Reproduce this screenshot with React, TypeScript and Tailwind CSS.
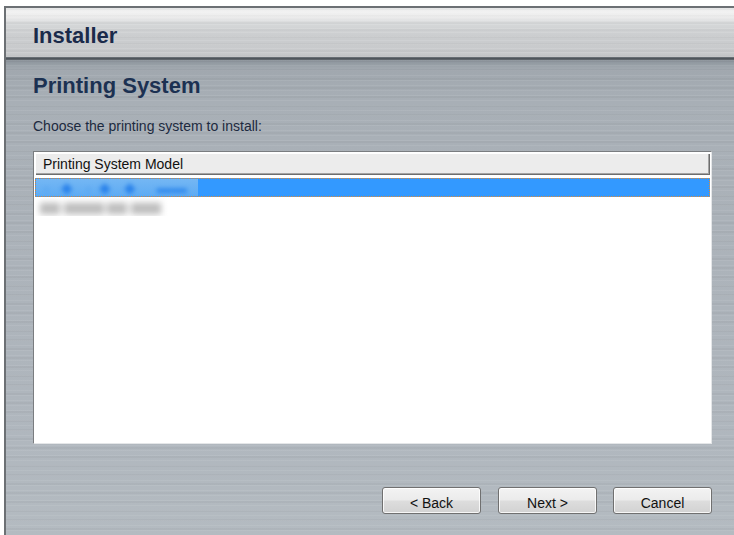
import React from "react";

function WizardButton({ label }: { label: string }) {
  return (
    <button
      type="button"
      className="box-border h-[27px] w-[99px] rounded-[3px] border border-[#707070] bg-[image:linear-gradient(180deg,#f3f3f3_0%,#ebebeb_48%,#dddddd_52%,#d2d2d2_100%)] pt-[5px] text-center text-[14px] leading-[16px] text-[#111] shadow-[inset_0_0_0_1px_rgba(255,255,255,0.8)]"
    >
      {label}
    </button>
  );
}

export default function App() {
  return (
    <div className="h-[535px] w-[734px] overflow-hidden bg-white pl-[4px] pt-[6px] font-['Liberation_Sans',Arial,sans-serif]">
      <div className="flex h-[529px] flex-col border-l-2 border-t-2 border-[#6c7074]">
        {/* title band */}
        <div className="h-[49px] shrink-0 bg-[image:repeating-linear-gradient(180deg,rgba(255,255,255,0.10)_0px,rgba(255,255,255,0.10)_1px,transparent_1px,transparent_4px),repeating-linear-gradient(180deg,rgba(0,0,0,0.025)_0px,rgba(0,0,0,0.025)_2px,transparent_2px,transparent_7px),linear-gradient(180deg,#e6e7e8_0px,#f1f1f1_3px,#ededed_9px,#d6d8d9_15px,#cbcdcf_28px,#c7c9cb_46px,#bdbfc1_49px)] pl-[27px] pt-[15px]">
          <h1 className="text-[22px] font-bold leading-[26px] text-[#1a2a4a]">Installer</h1>
        </div>
        <div className="h-[3px] shrink-0 bg-[image:linear-gradient(180deg,#737a80,#4f555b_50%,#646b71)]" />

        {/* page body */}
        <div className="flex flex-1 flex-col bg-[image:repeating-linear-gradient(180deg,rgba(255,255,255,0.07)_0px,rgba(255,255,255,0.07)_1px,transparent_1px,transparent_5px),repeating-linear-gradient(180deg,rgba(0,0,0,0.03)_0px,rgba(0,0,0,0.03)_2px,transparent_2px,transparent_9px),linear-gradient(180deg,#8b939b_0px,#a0a7ae_8px,#a8afb6_40px,#acb3ba_200px,#b0b7be_380px,#b4bbc1_475px)] pl-[27px] pr-[22px] pt-[13px]">
          <h2 className="text-[22px] font-bold leading-[26px] text-[#1c3152]">Printing System</h2>
          <p className="mt-[19px] text-[14px] leading-[16px] text-[#1d2a40]">
            Choose the printing system to install:
          </p>

          {/* model list */}
          <div className="mt-[17px] box-border h-[293px] border border-b-[#e4e6e8] border-l-[#7a7d80] border-r-[#e4e6e8] border-t-[#7a7d80] bg-white p-px">
            <div className="box-border h-[22px] bg-[#ececec] pl-[8px] pt-[3px] text-[14px] leading-[16px] text-[#111] shadow-[inset_1px_1px_0_#ffffff,inset_-1px_-1px_0_#6e6e6e,inset_-2px_-2px_0_#a4a4a4]">
              Printing System Model
            </div>
            <div className="mt-[3px] box-border flex h-[19px] border border-dotted border-[#d98a3c] bg-[#3399ff]">
              <div className="flex h-full w-[162px] shrink-0 items-center overflow-hidden bg-[image:linear-gradient(180deg,#74b7f4,#5eabf3)] pl-[8px]">
                <span className="whitespace-nowrap text-[15px] leading-[17px] text-[#2a82ea] blur-[2px]">
                  ·&nbsp;&nbsp;&nbsp;◆&nbsp;&nbsp;&nbsp;·&nbsp;&nbsp;◆&nbsp;&nbsp;&nbsp;◆&nbsp;&nbsp;&nbsp;&nbsp;&nbsp;
                </span>
                <span className="whitespace-nowrap text-[15px] font-bold leading-[17px] text-[#3088ec] blur-[2px]">
                  ▬▬
                </span>
              </div>
            </div>
            <div className="flex h-[19px] w-[162px] items-center overflow-hidden pl-[5px]">
              <span className="whitespace-nowrap text-[13px] leading-[15px] text-[#bdbdbd] blur-[3px]">
                ▆▆ ▆▆▆▆ ▆▆ ▆▆▆
              </span>
            </div>
          </div>

          {/* navigation */}
          <div className="mt-[43px] flex justify-end">
            <WizardButton label="< Back" />
            <div className="ml-[17px]">
              <WizardButton label="Next >" />
            </div>
            <div className="ml-[16px]">
              <WizardButton label="Cancel" />
            </div>
          </div>
        </div>
      </div>
    </div>
  );
}
